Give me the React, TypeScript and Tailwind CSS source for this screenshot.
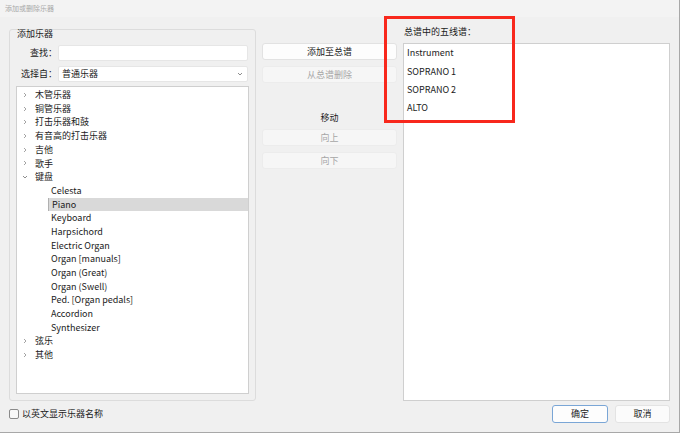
import React from 'react';

const categoriesTop = ['木管乐器', '铜管乐器', '打击乐器和鼓', '有音高的打击乐器', '吉他', '歌手'];
const keyboards = [
  'Celesta', 'Piano', 'Keyboard', 'Harpsichord', 'Electric Organ', 'Organ [manuals]',
  'Organ (Great)', 'Organ (Swell)', 'Ped. [Organ pedals]', 'Accordion', 'Synthesizer',
];
const categoriesBottom = ['弦乐', '其他'];
const staves = ['Instrument', 'SOPRANO 1', 'SOPRANO 2', 'ALTO'];

const Chevron: React.FC<{ open?: boolean }> = ({ open }) => (
  <svg width="6" height="6" viewBox="0 0 6 6" className="shrink-0">
    {open ? (
      <path d="M1 2 L3 4 L5 2" fill="none" stroke="#808080" strokeWidth="0.9" />
    ) : (
      <path d="M2 1 L4 3 L2 5" fill="none" stroke="#9a9a9a" strokeWidth="0.9" />
    )}
  </svg>
);

const Btn: React.FC<{ label: string; disabled?: boolean; className?: string }> = ({ label, disabled, className }) => (
  <div
    className={
      'h-[17px] w-[135px] rounded-[3px] flex items-center justify-center text-[9px] ' +
      (disabled
        ? 'bg-[#f6f6f6] border border-[#ececec] text-[#a6a6a6] '
        : 'bg-[#fdfdfd] border border-[#e2e2e2] text-[#1b1b1b] ') +
      (className ?? '')
    }
  >
    {label}
  </div>
);

export default function App() {
  return (
    <div className="relative w-[680px] h-[433px] bg-[#f0f0f0] border-r border-b border-[#a8a8a8] flex flex-col font-['Noto_Sans_CJK_SC','Noto_Sans',sans-serif] text-[#1b1b1b] overflow-hidden">
      {/* title bar */}
      <div className="h-[17px] shrink-0 bg-[#f3f3f3] flex items-center pl-[5px] text-[7px] text-[#a8a8a8]">
        添加或删除乐器
      </div>

      {/* body */}
      <div className="flex items-start h-[387px] shrink-0">
        {/* group box */}
        <div className="ml-[9px] mt-[12px] w-[247px] h-[372px] border border-[#dcdcdc] rounded-[3px] flex flex-col">
          <div className="pl-[7px] h-[7px] leading-[7px] text-[9px]">添加乐器</div>

          <div className="mt-[8px] flex items-center h-[16px]">
            <div className="w-[47px] text-right text-[9px]">查找：</div>
            <div className="ml-[1px] w-[190px] h-[16px] bg-white border border-[#e6e6e6] rounded-[2px]" />
          </div>

          <div className="mt-[5px] flex items-center h-[16px]">
            <div className="w-[47px] text-right text-[9px]">选择自：</div>
            <div className="ml-[1px] w-[190px] h-[16px] bg-white border border-[#e6e6e6] rounded-[2px] flex items-center justify-between pl-[3px] pr-[4px] text-[9px]">
              <span>普通乐器</span>
              <svg width="6" height="4" viewBox="0 0 6 4">
                <path d="M1 1 L3 3 L5 1" fill="none" stroke="#707070" strokeWidth="0.8" />
              </svg>
            </div>
          </div>

          <div className="mt-[4px] ml-[6px] w-[233px] h-[308px] bg-white border border-[#cfcfcf] pt-px text-[9px]">
            {categoriesTop.map((c) => (
              <div key={c} className="h-[13.7px] flex items-center pl-[5px]">
                <Chevron />
                <span className="ml-[7px]">{c}</span>
              </div>
            ))}
            <div className="h-[13.7px] flex items-center pl-[5px]">
              <Chevron open />
              <span className="ml-[7px]">键盘</span>
            </div>
            {keyboards.map((k) => (
              <div
                key={k}
                className={
                  'h-[13.7px] flex items-center ml-[31px] pl-[3px] ' +
                  (k === 'Piano' ? 'bg-[#d9d9d9] border-l border-[#b0b0b0]' : '')
                }
              >
                {k}
              </div>
            ))}
            {categoriesBottom.map((c) => (
              <div key={c} className="h-[13.7px] flex items-center pl-[5px]">
                <Chevron />
                <span className="ml-[7px]">{c}</span>
              </div>
            ))}
          </div>
        </div>

        {/* middle buttons */}
        <div className="ml-[6px] mt-[26px] flex flex-col">
          <Btn label="添加至总谱" />
          <Btn label="从总谱删除" disabled className="mt-[6px]" />
          <div className="mt-[30px] h-[10px] leading-[10px] text-center text-[9px]">移动</div>
          <Btn label="向上" disabled className="mt-[6px]" />
          <Btn label="向下" disabled className="mt-[6px]" />
        </div>

        {/* staves */}
        <div className="ml-[6px] mt-[10px] flex flex-col">
          <div className="h-[10px] leading-[10px] pl-px text-[9px]">总谱中的五线谱：</div>
          <div className="mt-[6px] w-[267px] h-[358px] bg-white border border-[#cfcfcf] text-[9px]">
            {staves.map((s) => (
              <div key={s} className="h-[18.3px] flex items-center pl-[3px]">
                {s}
              </div>
            ))}
          </div>
        </div>
      </div>

      {/* footer */}
      <div className="flex items-center h-[18px] mt-[1px]">
        <div className="ml-[9px] w-[10px] h-[10px] border border-[#8a8a8a] rounded-[2px] bg-[#f8f8f8]" />
        <span className="ml-[3px] text-[9px]">以英文显示乐器名称</span>
        <div className="ml-auto flex gap-[7px] mr-[9px]">
          <div className="w-[56px] h-[18px] bg-[#fdfdfd] border border-[#7aa6d6] rounded-[3px] flex items-center justify-center text-[9px]">
            确定
          </div>
          <div className="w-[55px] h-[18px] bg-[#fbfbfb] border border-[#e3e3e3] rounded-[3px] flex items-center justify-center text-[9px]">
            取消
          </div>
        </div>
      </div>

      {/* red highlight overlay */}
      <div className="absolute left-[384px] top-[16px] w-[131px] h-[107px] border-[3px] border-[#f8281c] pointer-events-none" />
    </div>
  );
}
